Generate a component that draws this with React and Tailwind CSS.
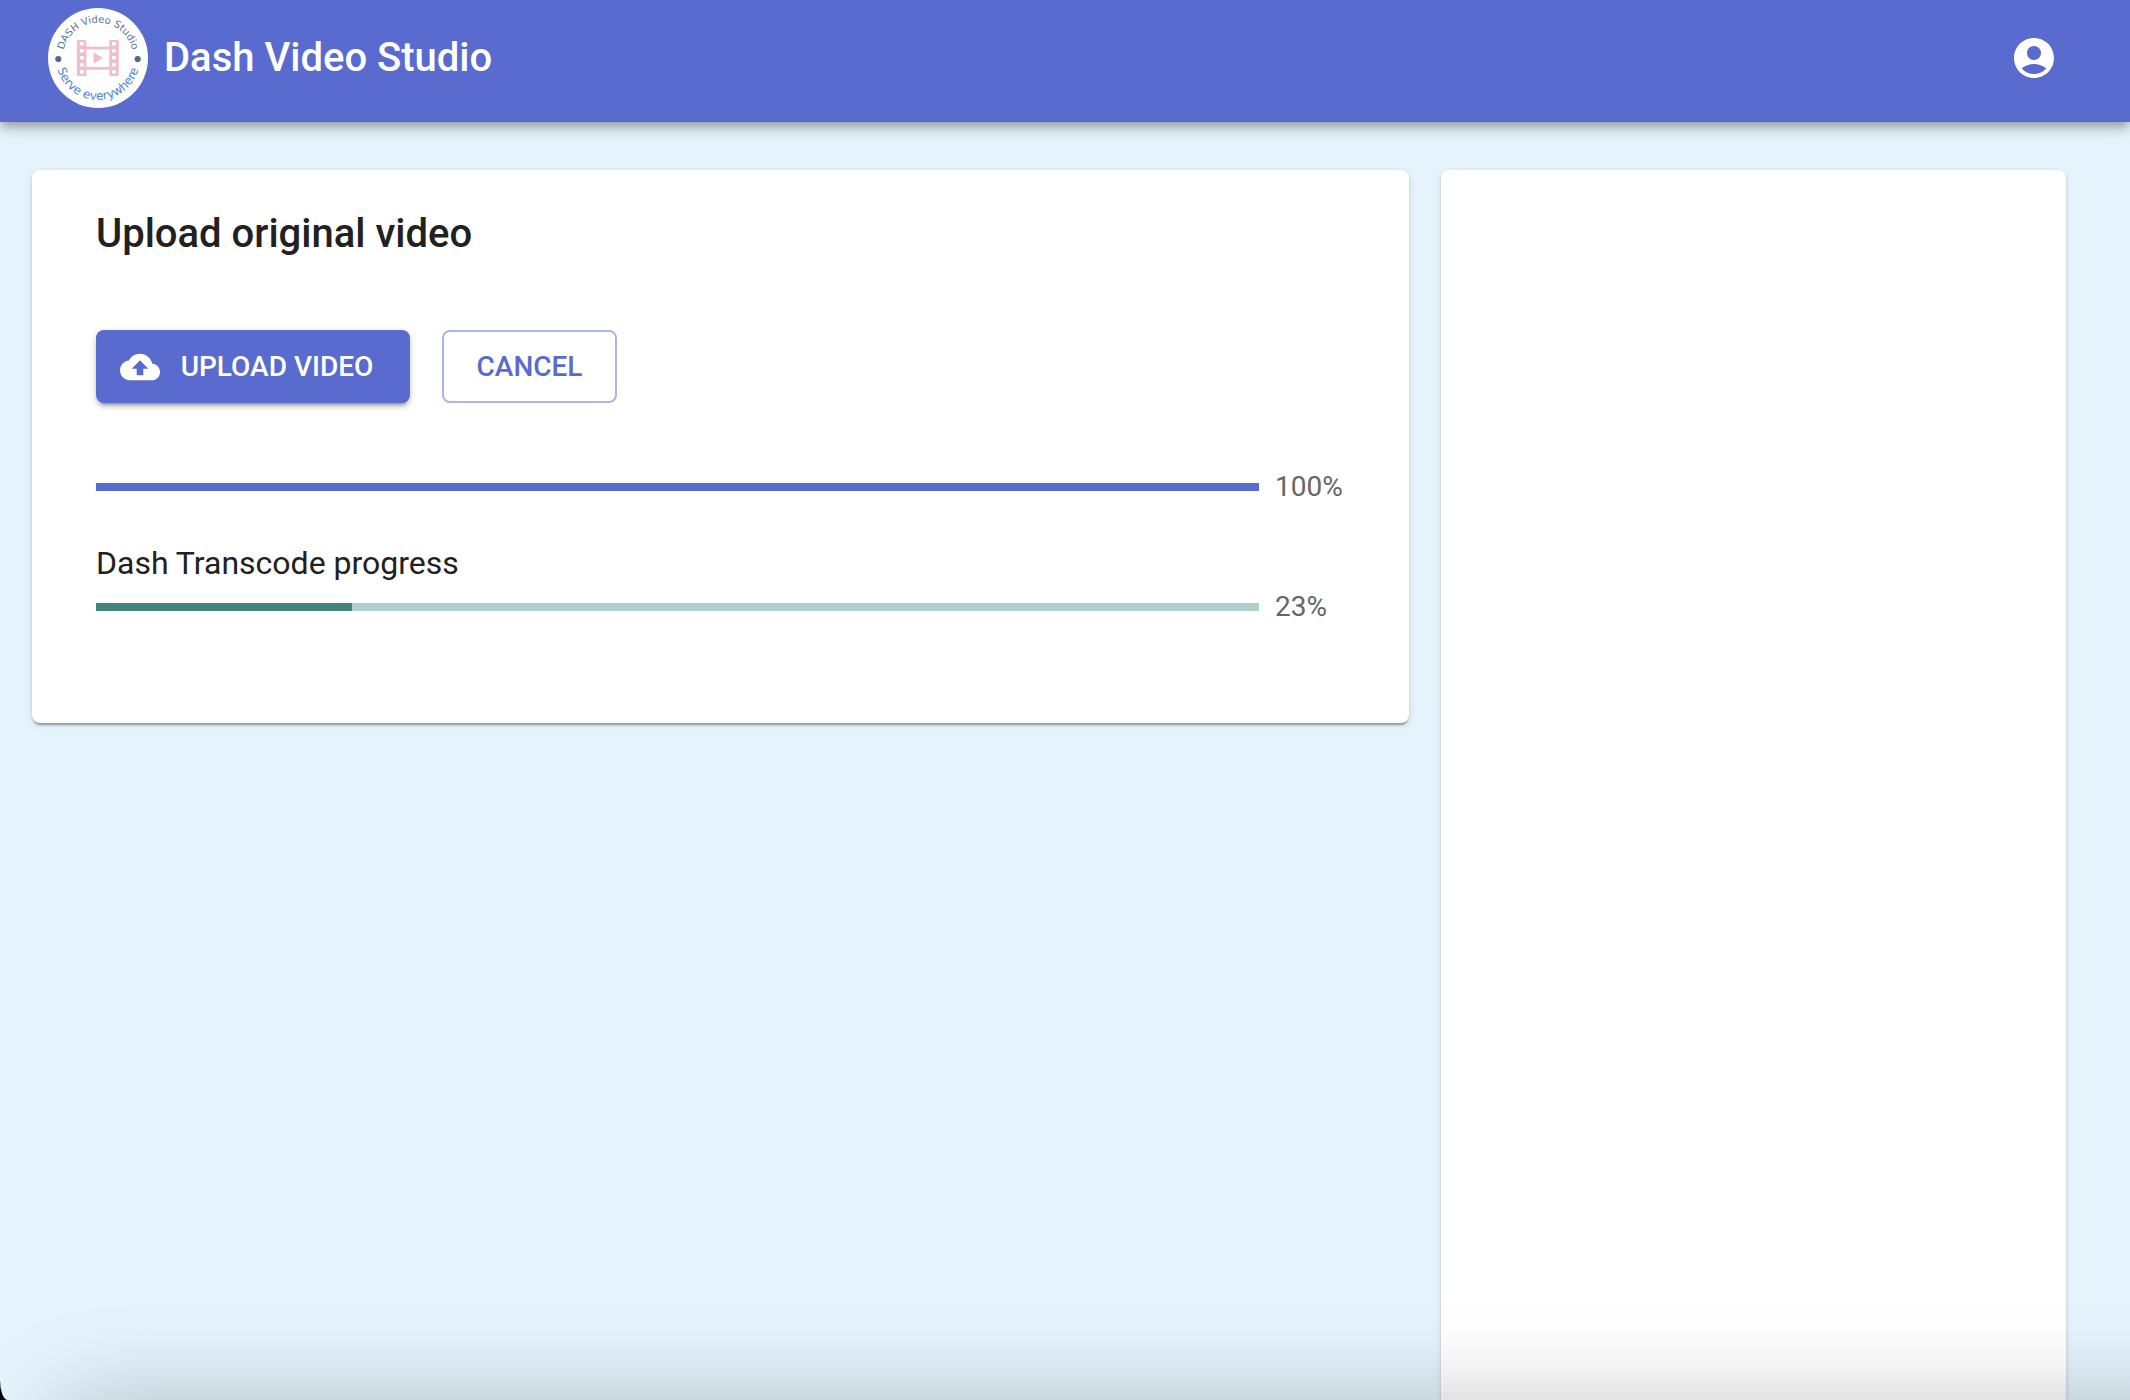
import React from "react";

const HOLES = [34, 41, 48, 55, 62];

function Logo() {
  return (
    <svg viewBox="0 0 100 100" className="size-[100px] shrink-0" role="img" aria-label="Dash Video Studio logo">
      <defs>
        <path id="logo-top" d="M14.7 50A35.3 35.3 0 0 1 85.3 50" />
        <path id="logo-bottom" d="M8 50A42 42 0 0 0 92 50" />
      </defs>
      <circle cx="50" cy="50" r="50" fill="#fff" />
      <g fontFamily="'DejaVu Sans', sans-serif" textAnchor="middle">
        <text fontSize="10" fill="#60738f">
          <textPath href="#logo-top" startOffset="50%">DASH Video Studio</textPath>
        </text>
        <text fontSize="12" fill="#4a86d8">
          <textPath href="#logo-bottom" startOffset="50%">Serve everywhere</textPath>
        </text>
      </g>
      <circle cx="10.3" cy="51" r="3.1" fill="#546a8a" />
      <circle cx="89.7" cy="51" r="3.1" fill="#546a8a" />
      <g fill="#f1bdc8">
        <rect x="29" y="32" width="9.4" height="36" rx="1" />
        <rect x="61.3" y="32" width="9.4" height="36" rx="1" />
        <rect x="38" y="38.7" width="24" height="2.7" />
        <rect x="38" y="59" width="24" height="2.7" />
        <path d="M46 45L54 50L46 55Z" stroke="#f1bdc8" strokeLinejoin="round" />
      </g>
      <g fill="#fff">
        {HOLES.map((y) => (
          <React.Fragment key={y}>
            <rect x="31.9" y={y} width="4" height="3.6" rx="0.6" />
            <rect x="64" y={y} width="4" height="3.6" rx="0.6" />
          </React.Fragment>
        ))}
      </g>
    </svg>
  );
}

function AccountIcon() {
  return (
    <svg viewBox="0 0 24 24" className="size-12" fill="currentColor" aria-hidden="true">
      <path d="M12 2C6.48 2 2 6.48 2 12s4.48 10 10 10 10-4.48 10-10S17.52 2 12 2zm0 4c1.93 0 3.5 1.57 3.5 3.5S13.93 13 12 13s-3.5-1.57-3.5-3.5S10.07 6 12 6zm0 14c-2.03 0-4.43-.82-6.14-2.88C7.55 15.8 9.68 15 12 15s4.45.8 6.14 2.12C16.43 19.18 14.03 20 12 20z" />
    </svg>
  );
}

function CloudUploadIcon() {
  return (
    <svg viewBox="0 0 24 24" className="size-10 shrink-0" fill="currentColor" aria-hidden="true">
      <path d="M19.35 10.04C18.67 6.59 15.64 4 12 4 9.11 4 6.6 5.64 5.35 8.04 2.34 8.36 0 10.91 0 14c0 3.31 2.69 6 6 6h13c2.76 0 5-2.24 5-5 0-2.64-2.05-4.78-4.65-4.96zM14 13v4h-4v-4H7l5-5 5 5h-3z" />
    </svg>
  );
}

function ProgressRow({ label, value, fill = value, track, bar }) {
  return (
    <div className="flex items-center gap-4">
      <div
        role="progressbar"
        aria-label={label}
        aria-valuenow={value}
        aria-valuemin={0}
        aria-valuemax={100}
        className={`h-2 flex-1 ${track}`}
      >
        <div className={`h-full ${bar}`} style={{ width: `${fill}%` }} />
      </div>
      <span className="min-w-[70px] text-[28px] leading-10 text-[#666666]">{value}%</span>
    </div>
  );
}

const CARD =
  "rounded-lg bg-white shadow-[0_4px_2px_-2px_rgba(0,0,0,0.2),0_2px_2px_0_rgba(0,0,0,0.14),0_2px_6px_0_rgba(0,0,0,0.12)]";

export default function App() {
  return (
    <div className="bg-[#02030a] font-[Roboto,sans-serif] text-[#212121]">
      <div className="relative flex h-screen flex-col overflow-hidden rounded-bl-[8px_20px] bg-[#e5f3fc]">
        <header className="z-10 flex shrink-0 items-center bg-[#596bcf] pt-2 pr-[72px] pb-[14px] pl-12 text-white shadow-[0_4px_8px_-2px_rgba(0,0,0,0.2),0_8px_10px_0_rgba(0,0,0,0.14),0_2px_20px_0_rgba(0,0,0,0.12)]">
          <Logo />
          <h1 className="ml-4 flex-1 text-[40px] leading-[64px] font-medium">Dash Video Studio</h1>
          <button type="button" aria-label="Account" className="rounded-full">
            <AccountIcon />
          </button>
        </header>

        <main className="grid flex-1 grid-cols-[2.203fr_1fr] items-start gap-8 pt-12 pr-16 pl-8">
          <section className={`px-16 pt-8 pb-24 ${CARD}`}>
            <h2 className="text-[40px] leading-[64px] font-medium">Upload original video</h2>
            <div className="mt-16 flex gap-8 text-[28px] leading-[49px] font-medium">
              <button
                type="button"
                className="flex min-w-[314px] items-center gap-4 rounded-lg bg-[#596bcf] py-3 pr-8 pl-6 text-white shadow-[0_6px_2px_-4px_rgba(0,0,0,0.2),0_4px_4px_0_rgba(0,0,0,0.14),0_2px_10px_0_rgba(0,0,0,0.12)]"
              >
                <CloudUploadIcon />
                <span className="flex-1">UPLOAD VIDEO</span>
              </button>
              <button
                type="button"
                className="min-w-[175px] rounded-lg border-2 border-[#acb5e7] px-[30px] text-[#596bcf]"
              >
                CANCEL
              </button>
            </div>
            <div className="mt-16">
              <ProgressRow label="Upload progress" value={100} track="bg-[#acb5e7]" bar="bg-[#596bcf]" />
            </div>
            <p className="mt-8 text-[32px] leading-[48px]">Dash Transcode progress</p>
            <ProgressRow
              label="Dash Transcode progress"
              value={23}
              fill={22}
              track="bg-[#aecfcd]"
              bar="bg-[#40847a]"
            />
          </section>

          <aside className={`h-screen ${CARD}`} />
        </main>

        <div className="pointer-events-none absolute top-full -right-24 left-16 h-40 shadow-[0_10px_100px_0_rgba(0,0,0,0.27)]" />
      </div>
    </div>
  );
}
